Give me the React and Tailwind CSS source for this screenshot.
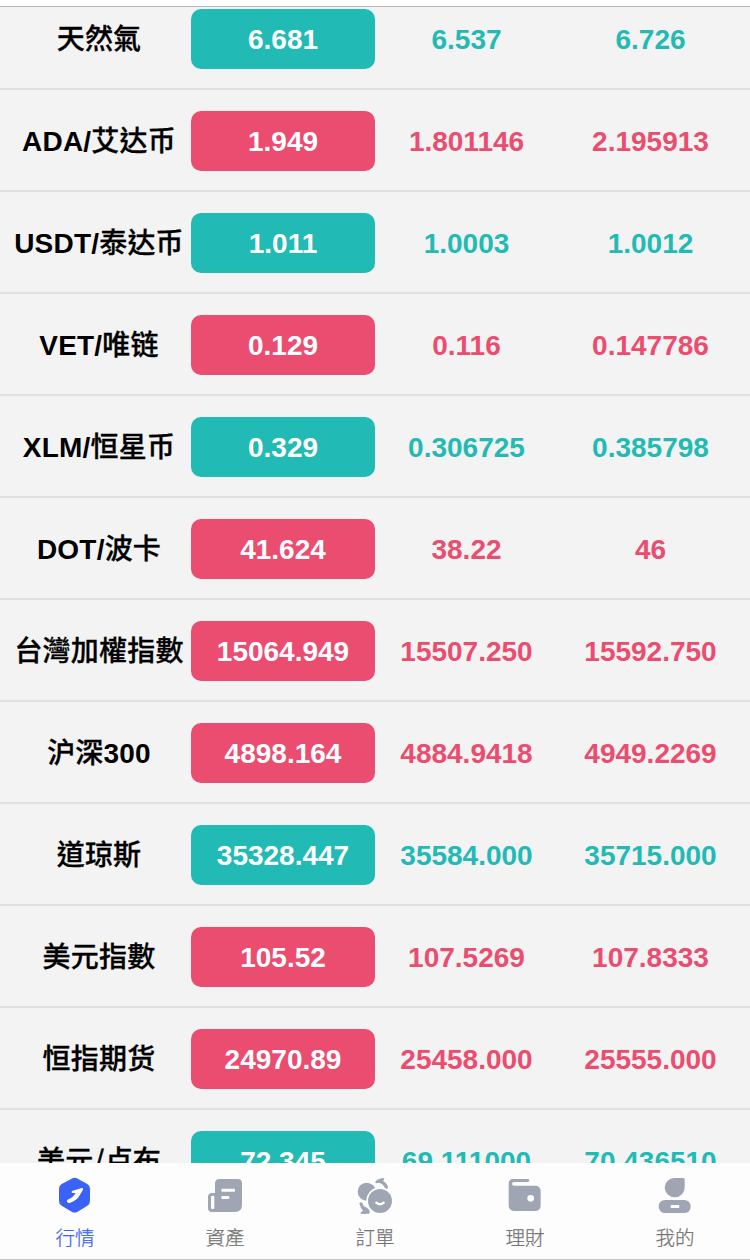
import React, { useState } from "react";
import clsx from "clsx";

const quotes = [
  { name: "天然氣", price: "6.681", low: "6.537", high: "6.726", up: true },
  { code: "ADA/", name: "艾达币", price: "1.949", low: "1.801146", high: "2.195913", up: false },
  { code: "USDT/", name: "泰达币", price: "1.011", low: "1.0003", high: "1.0012", up: true },
  { code: "VET/", name: "唯链", price: "0.129", low: "0.116", high: "0.147786", up: false },
  { code: "XLM/", name: "恒星币", price: "0.329", low: "0.306725", high: "0.385798", up: true },
  { code: "DOT/", name: "波卡", price: "41.624", low: "38.22", high: "46", up: false },
  { name: "台灣加權指數", price: "15064.949", low: "15507.250", high: "15592.750", up: false },
  { name: "沪深", suffix: "300", price: "4898.164", low: "4884.9418", high: "4949.2269", up: false },
  { name: "道琼斯", price: "35328.447", low: "35584.000", high: "35715.000", up: true },
  { name: "美元指數", price: "105.52", low: "107.5269", high: "107.8333", up: false },
  { name: "恒指期货", price: "24970.89", low: "25458.000", high: "25555.000", up: false },
  { name: "美元/卢布", price: "72.345", low: "69.111000", high: "70.436510", up: true },
];

function MarketIcon() {
  return (
    <>
      <path
        fill="currentColor"
        d="M80 41Q89 36 98 41L127 57Q135 62 135 71V108Q135 117 127 122L98 140Q89 145 80 140L50 122Q42 117 42 108V71Q42 62 50 57Z"
      />
      <path
        fill="#fff"
        d="M111 69L83 77Q77 80 82 84L92 84Q85 97 70 103Q63 107 67 112Q70 115 76 113Q97 106 104 91L114 74Q115 68 111 69Z"
      />
    </>
  );
}

function AssetsIcon() {
  return (
    <>
      <path
        fill="currentColor"
        d="M74 42H128Q141 42 141 55V120Q141 141 119 141H51Q39 141 39 128V96Q39 84 51 84H60V56Q60 42 74 42Z"
      />
      <rect x="48" y="92" width="10" height="40" rx="4" fill="#fff" />
      <rect x="79" y="71" width="41" height="9" rx="3" fill="#fff" />
      <rect x="79" y="93" width="24" height="9" rx="3" fill="#fff" />
    </>
  );
}

function OrdersIcon() {
  return (
    <>
      <circle cx="65" cy="80" r="27" fill="currentColor" />
      <path
        fill="currentColor"
        d="M92 48Q100 40 114 39Q119 40 117 44L114 48Q127 55 129 67Q129 72 124 72Q120 71 119 67Q114 57 103 53L94 55Q89 53 92 48Z"
      />
      <path
        fill="currentColor"
        d="M43 115Q47 109 52 114Q55 126 66 128L72 134L75 142Q74 146 70 146L50 147Q45 145 48 141L55 137Q46 130 43 115Z"
      />
      <circle cx="105" cy="108" r="41" fill="#fff" />
      <circle cx="105" cy="108" r="36" fill="currentColor" />
      <path
        d="M94 113Q105 123 116 113"
        fill="none"
        stroke="#fff"
        strokeWidth="7"
        strokeLinecap="round"
      />
    </>
  );
}

function WalletIcon() {
  return (
    <>
      <path
        fill="currentColor"
        d="M54 42H98Q103 42 103 46Q103 51 98 51H57Q51 51 51 56Q51 62 57 62H120Q137 62 137 79V120Q137 138 120 138H60Q41 138 41 120V57Q41 42 54 42Z"
      />
      <circle cx="107" cy="100" r="10" fill="#fff" />
    </>
  );
}

function ProfileIcon() {
  return (
    <>
      <path fill="currentColor" d="M88 39H115Q119 39 119 43V68A30 29 0 1 1 88 39Z" />
      <rect x="41" y="105" width="96" height="39" rx="19" fill="currentColor" />
      <rect x="77" y="120" width="26" height="9" rx="2" fill="#fff" />
    </>
  );
}

const tabs = [
  { label: "行情", Icon: MarketIcon },
  { label: "資產", Icon: AssetsIcon },
  { label: "訂單", Icon: OrdersIcon },
  { label: "理財", Icon: WalletIcon },
  { label: "我的", Icon: ProfileIcon },
];

function QuoteRow({ quote }) {
  const color = quote.up ? "text-[#22bab4]" : "text-[#eb4d70]";

  return (
    <div className="grid h-[102px] shrink-0 grid-cols-4 items-center border-b-2 border-[#e1e1e1] px-[7px] pt-0.5 text-center text-[28px] font-bold">
      <div className="pb-0.5 tracking-[0.2px] whitespace-nowrap text-black">
        {quote.code}
        <span className="font-['Noto_Sans_CJK_TC',sans-serif] font-medium [-webkit-text-stroke:0.3px_black]">
          {quote.name}
        </span>
        {quote.suffix}
      </div>
      <div
        className={clsx(
          "flex h-[60px] items-center justify-center rounded-[10px] pt-0.5 text-white",
          quote.up ? "bg-[#22bab4]" : "bg-[#eb4d70]"
        )}
      >
        {quote.price}
      </div>
      <div className={clsx("pt-0.5 pr-px", color)}>{quote.low}</div>
      <div className={clsx("pt-0.5 pr-px", color)}>{quote.high}</div>
    </div>
  );
}

function App() {
  const [active, setActive] = useState(0);

  return (
    <div className="flex h-[1260px] w-[750px] flex-col overflow-hidden bg-white pt-1.5 font-['Liberation_Sans','Noto_Sans_CJK_TC',sans-serif]">
      <div className="flex h-[1157px] flex-col overflow-hidden border-t border-[#b8b8b8] bg-[#f3f3f3]">
        <div className="-mt-[19px] flex flex-col">
          {quotes.map((quote) => (
            <QuoteRow key={quote.name} quote={quote} />
          ))}
        </div>
      </div>
      <nav className="grid h-[97px] grid-cols-5 border-b border-[#c4c4c4] bg-[#fdfdfd]">
        {tabs.map(({ label, Icon }, index) => (
          <button
            key={label}
            onClick={() => setActive(index)}
            className="flex flex-col items-center pt-3.5"
          >
            <svg
              viewBox="36 36 108 108"
              className={clsx(
                "h-9 w-9 overflow-visible",
                index === active ? "text-[#3a62f6]" : "text-[#9fa5b2]"
              )}
            >
              <Icon />
            </svg>
            <span
              className={clsx(
                "mt-[9px] font-['Noto_Sans_CJK_TC',sans-serif] text-[19.5px] leading-[30px] font-light [-webkit-text-stroke:0.25px_currentColor]",
                index === active ? "text-[#3a62f6]" : "text-[#757575]"
              )}
            >
              {label}
            </span>
          </button>
        ))}
      </nav>
    </div>
  );
}

export default App;
